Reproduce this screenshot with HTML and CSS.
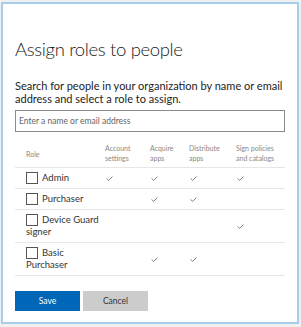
FILE: index.html
```html
<!DOCTYPE html>
<html lang="en">
<head>
  <meta charset="UTF-8">
  <title>Assign roles to people</title>
  <link rel="stylesheet" href="styles.css">
</head>
<body>
  <div class="dialog">
    <h1>Assign roles to people</h1>
    <p class="intro">Search for people in your organization by name or email address and select a role to assign.</p>
    <input class="search" type="text" placeholder="Enter a name or email address">

    <table class="roles">
      <thead>
        <tr>
          <th class="role">Role</th>
          <th class="c1">Account<br>settings</th>
          <th class="c2">Acquire<br>apps</th>
          <th class="c3">Distribute<br>apps</th>
          <th class="c4">Sign policies<br>and catalogs</th>
        </tr>
      </thead>
      <tbody>
        <tr>
          <td class="role"><span class="box"></span>Admin</td>
          <td><svg class="tick" viewBox="0 0 8 6"><polyline points="0.5,3 3,5.3 7.5,0.7"/></svg></td>
          <td><svg class="tick" viewBox="0 0 8 6"><polyline points="0.5,3 3,5.3 7.5,0.7"/></svg></td>
          <td><svg class="tick" viewBox="0 0 8 6"><polyline points="0.5,3 3,5.3 7.5,0.7"/></svg></td>
          <td><svg class="tick" viewBox="0 0 8 6"><polyline points="0.5,3 3,5.3 7.5,0.7"/></svg></td>
        </tr>
        <tr>
          <td class="role"><span class="box"></span>Purchaser</td>
          <td></td>
          <td><svg class="tick" viewBox="0 0 8 6"><polyline points="0.5,3 3,5.3 7.5,0.7"/></svg></td>
          <td><svg class="tick" viewBox="0 0 8 6"><polyline points="0.5,3 3,5.3 7.5,0.7"/></svg></td>
          <td></td>
        </tr>
        <tr>
          <td class="role"><span class="box"></span>Device Guard signer</td>
          <td></td>
          <td></td>
          <td></td>
          <td><svg class="tick" viewBox="0 0 8 6"><polyline points="0.5,3 3,5.3 7.5,0.7"/></svg></td>
        </tr>
        <tr>
          <td class="role"><span class="box"></span>Basic Purchaser</td>
          <td></td>
          <td><svg class="tick" viewBox="0 0 8 6"><polyline points="0.5,3 3,5.3 7.5,0.7"/></svg></td>
          <td><svg class="tick" viewBox="0 0 8 6"><polyline points="0.5,3 3,5.3 7.5,0.7"/></svg></td>
          <td></td>
        </tr>
      </tbody>
    </table>

    <div class="actions">
      <button class="btn btn-save">Save</button>
      <button class="btn btn-cancel">Cancel</button>
    </div>
  </div>
</body>
</html>
```

FILE: styles.css
```css
body {
  margin: 0;
  padding: 2px 0 0 1px;
  background: #f0f0f0;
  font-family: Lato, 'Open Sans', sans-serif;
  color: #333;
}

.dialog {
  width: 270px;
  height: 318px;
  padding: 0 12px;
  background: white;
  border: 2px solid #a7cdec;
}

h1 {
  font-size: 18.5px;
  font-weight: 300;
  line-height: 26px;
  letter-spacing: -0.35px;
  margin: 32px 0 0;
  color: #222;
}

.intro {
  font-size: 11px;
  line-height: 12.5px;
  margin: 18px 0 5px;
  color: #222;
}

.search {
  display: block;
  box-sizing: border-box;
  width: 270px;
  height: 22px;
  margin: 0;
  padding: 0 3px;
  border: 1.5px solid #8a8a8a;
  font-family: inherit;
  font-size: 8.5px;
}

.search::placeholder {
  color: #666;
}

.roles {
  width: 270px;
  margin-top: 10px;
  border-collapse: collapse;
  table-layout: fixed;
}

.roles th {
  font-weight: normal;
  font-size: 7px;
  line-height: 9.5px;
  color: #888;
  text-align: left;
  vertical-align: middle;
  padding: 2px 0 4px;
  border-bottom: 1px solid #e6e6e6;
}

.roles td {
  padding: 4px 0;
  border-bottom: 1px solid #e6e6e6;
  vertical-align: middle;
}

.roles .role {
  width: 79px;
  padding-left: 11px;
  font-size: 9.5px;
  line-height: 12px;
  color: #333;
}

.roles th.role {
  font-size: 7px;
  color: #888;
}

.roles .c1 { width: 45px; }
.roles .c2 { width: 39px; }
.roles .c3 { width: 47px; }
.roles .c4 { width: 49px; }

.box {
  display: inline-block;
  box-sizing: border-box;
  width: 12px;
  height: 12px;
  border: 1px solid #555;
  vertical-align: top;
  margin-right: 4px;
}

.tick {
  display: block;
  width: 7px;
  height: 5px;
  margin-left: 1px;
  fill: none;
  stroke: #555;
  stroke-width: 0.9;
}

.actions {
  display: flex;
  gap: 3px;
  margin-top: 15px;
}

.btn {
  width: 65px;
  height: 20px;
  border: none;
  font-family: inherit;
  font-size: 8.5px;
  padding: 0;
}

.btn-save {
  background: #0067b8;
  color: white;
}

.btn-cancel {
  background: #cccccc;
  color: #333;
}
```
